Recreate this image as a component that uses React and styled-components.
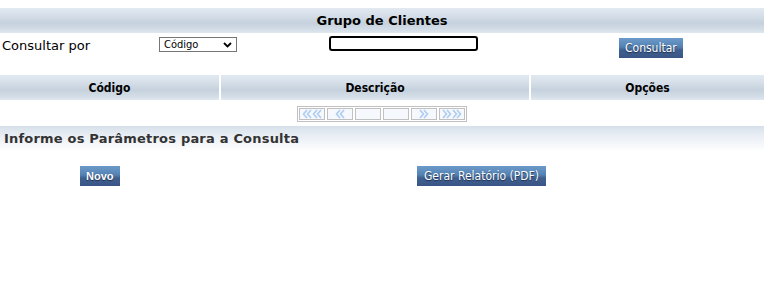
import React from 'react';
import styled, { createGlobalStyle } from 'styled-components';

const GlobalStyle = createGlobalStyle`
  body {
    margin: 0;
    padding-top: 8px;
    background: #fff;
    font-family: 'DejaVu Sans Condensed', 'DejaVu Sans', sans-serif;
  }
`;

const barGradient = `linear-gradient(to bottom, #e2e9f1 0%, #d6dfe9 30%, #c5d1dd 60%, #d3dde7 85%, #dfe7ef 100%)`;

const TitleBar = styled.div`
  height: 25px;
  background: ${barGradient};
  display: flex;
  align-items: center;
  justify-content: center;
  font-family: 'DejaVu Sans', sans-serif;
  font-weight: bold;
  font-size: 13px;
  color: #000;
`;

const SearchRow = styled.div`
  display: grid;
  grid-template-columns: 159px 170px 290px auto;
  align-items: start;
  justify-items: start;
  height: 39px;
  padding-top: 3px;
`;

const Label = styled.span`
  font-family: 'DejaVu Sans', sans-serif;
  font-size: 13px;
  padding-left: 2px;
  margin-top: 2px;
  color: #000;
`;

const Select = styled.div`
  height: 13px;
  border: 1px solid #767676;
  margin-top: 1px;
  display: flex;
  align-items: center;
  justify-content: space-between;
  padding: 0 4px;
  width: 68px;
  font-size: 11px;
  svg { display: block; }
`;

const Input = styled.div`
  width: 145px;
  height: 11px;
  border: 2px solid #000;
  border-radius: 3px;
`;

const Button = styled.button`
  border: none;
  height: 20px;
  padding: 0 ${(p) => p.$pad || 6}px;
  background: linear-gradient(to bottom, #6c9bcb 0%, #5381b3 45%, #3f5f8f 60%, #3a5585 100%);
  color: #fff;
  font-family: ${(p) => (p.$bold ? "'Liberation Sans', Arial, sans-serif" : "'DejaVu Sans Condensed', 'DejaVu Sans', sans-serif")};
  font-weight: ${(p) => (p.$bold ? 'bold' : 'normal')};
  font-size: ${(p) => (p.$bold ? 11 : 12)}px;
  text-shadow: 0 1px 1px #1d2f4f;
  cursor: pointer;
  margin-top: ${(p) => p.$top || 0}px;
`;

const TableHead = styled.div`
  display: grid;
  grid-template-columns: 219px 308px 1fr;
  column-gap: 2px;
`;

const HeadCell = styled.div`
  height: 25px;
  background: ${barGradient};
  display: flex;
  align-items: center;
  justify-content: center;
  font-weight: bold;
  font-size: 12px;
`;

const PagerRow = styled.div`
  display: flex;
  justify-content: center;
  padding: 6px 0 4px;
`;

const Pager = styled.div`
  display: flex;
  gap: 2px;
  padding: 1px;
  border: 1px solid #c0c0c0;
  margin-left: -1px;
`;

const PageCell = styled.div`
  box-sizing: border-box;
  width: 26px;
  height: 12px;
  border: 1px solid #c0c0c0;
  background: #f5f8fd;
  display: flex;
  align-items: center;
  justify-content: ${(p) => p.$align || 'center'};
  padding: 0 2px;
  svg { display: block; }
`;

const SectionBar = styled.div`
  height: 24px;
  background: linear-gradient(to bottom, #d6e0ea 0%, #e9eef4 40%, #fdfdfe 100%);
  display: flex;
  align-items: center;
  padding-left: 4px;
  font-family: 'DejaVu Sans', sans-serif;
  font-weight: bold;
  font-size: 13px;
  letter-spacing: 0.2px;
  color: #333;
`;

const Actions = styled.div`
  display: grid;
  grid-template-columns: 337px auto;
  padding: 16px 0 0 80px;
  justify-items: start;
`;

const Chevron = () => (
  <svg width="9" height="6" viewBox="0 0 9 6">
    <path d="M1 1l3.5 3.5L8 1" stroke="#000" strokeWidth="1.8" fill="none" />
  </svg>
);

// double chevron (like «), repeated `count` times, mirrored for "next"
const Arrows = ({ count = 1, dir = 'left' }) => {
  const w = count * 10;
  const paths = [];
  for (let i = 0; i < count; i++) {
    const x = i * 10;
    paths.push(`M${x + 5} 1L${x + 1.5} 5L${x + 5} 9M${x + 9} 1L${x + 5.5} 5L${x + 9} 9`);
  }
  return (
    <svg
      width={w}
      height="10"
      viewBox={`0 0 ${w} 10`}
      style={dir === 'right' ? { transform: 'scaleX(-1)' } : undefined}
    >
      <path d={paths.join('')} stroke="#aecbf1" strokeWidth="1.6" fill="none" />
    </svg>
  );
};

export default function App() {
  return (
    <>
      <GlobalStyle />
      <TitleBar>Grupo de Clientes</TitleBar>
      <SearchRow>
        <Label>Consultar por</Label>
        <Select>
          <span>Código</span>
          <Chevron />
        </Select>
        <Input />
        <Button $top={2} $pad={6}>Consultar</Button>
      </SearchRow>
      <TableHead>
        <HeadCell>Código</HeadCell>
        <HeadCell>Descrição</HeadCell>
        <HeadCell>Opções</HeadCell>
      </TableHead>
      <PagerRow>
        <Pager>
          <PageCell $align="flex-start"><Arrows count={2} /></PageCell>
          <PageCell><Arrows /></PageCell>
          <PageCell />
          <PageCell />
          <PageCell><Arrows dir="right" /></PageCell>
          <PageCell $align="flex-end"><Arrows count={2} dir="right" /></PageCell>
        </Pager>
      </PagerRow>
      <SectionBar>Informe os Parâmetros para a Consulta</SectionBar>
      <Actions>
        <Button $bold $pad={6}>Novo</Button>
        <Button $pad={7}>Gerar Relatório (PDF)</Button>
      </Actions>
    </>
  );
}
